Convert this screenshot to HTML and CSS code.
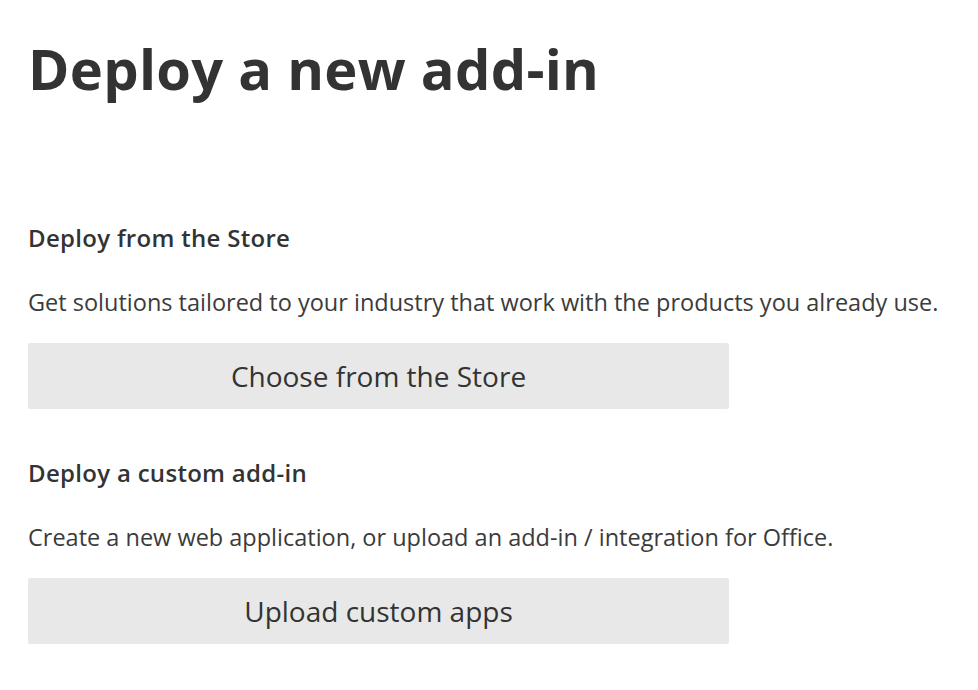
FILE: index.html
```html
<!DOCTYPE html>
<html lang="en">
<head>
<meta charset="utf-8">
<title>Deploy a new add-in</title>
<link rel="stylesheet" href="styles.css">
</head>
<body>
<main class="page">
  <h1 class="title">Deploy a new add-in</h1>
  <section class="section section-first">
    <h2 class="section-title">Deploy from the Store</h2>
    <p class="section-desc">Get solutions tailored to your industry that work with the products you already use.</p>
    <button class="action-btn" type="button">Choose from the Store</button>
  </section>
  <section class="section">
    <h2 class="section-title">Deploy a custom add-in</h2>
    <p class="section-desc">Create a new web application, or upload an add-in / integration for Office.</p>
    <button class="action-btn" type="button">Upload custom apps</button>
  </section>
</main>
</body>
</html>
```

FILE: styles.css
```css
html, body {
  margin: 0;
  padding: 0;
  background: #ffffff;
}

body {
  font-family: "Open Sans", "Noto Sans", sans-serif;
  color: #333333;
}

.page {
  padding: 38px 28px 0 28px;
  display: flex;
  flex-direction: column;
}

.title {
  margin: 0;
  font-size: 56px;
  line-height: 60px;
  font-weight: 700;
  color: #333333;
  letter-spacing: 0.3px;
}

.section {
  display: flex;
  flex-direction: column;
  margin-top: 51px;
}

.section-first {
  margin-top: 127px;
}

.section-title {
  margin: 0;
  font-size: 24px;
  line-height: 26px;
  font-weight: 600;
  color: #333333;
  letter-spacing: 0.3px;
}

.section-desc {
  margin: 37px 0 0 0;
  font-size: 23.5px;
  line-height: 28px;
  font-weight: 400;
  color: #3b3b3b;
}

.action-btn {
  margin-top: 27px;
  width: 701px;
  height: 66px;
  border: none;
  border-radius: 2px;
  background: #e8e8e8;
  font-family: "Open Sans", "Noto Sans", sans-serif;
  font-size: 28px;
  color: #333333;
  padding: 0;
  cursor: pointer;
}
```
